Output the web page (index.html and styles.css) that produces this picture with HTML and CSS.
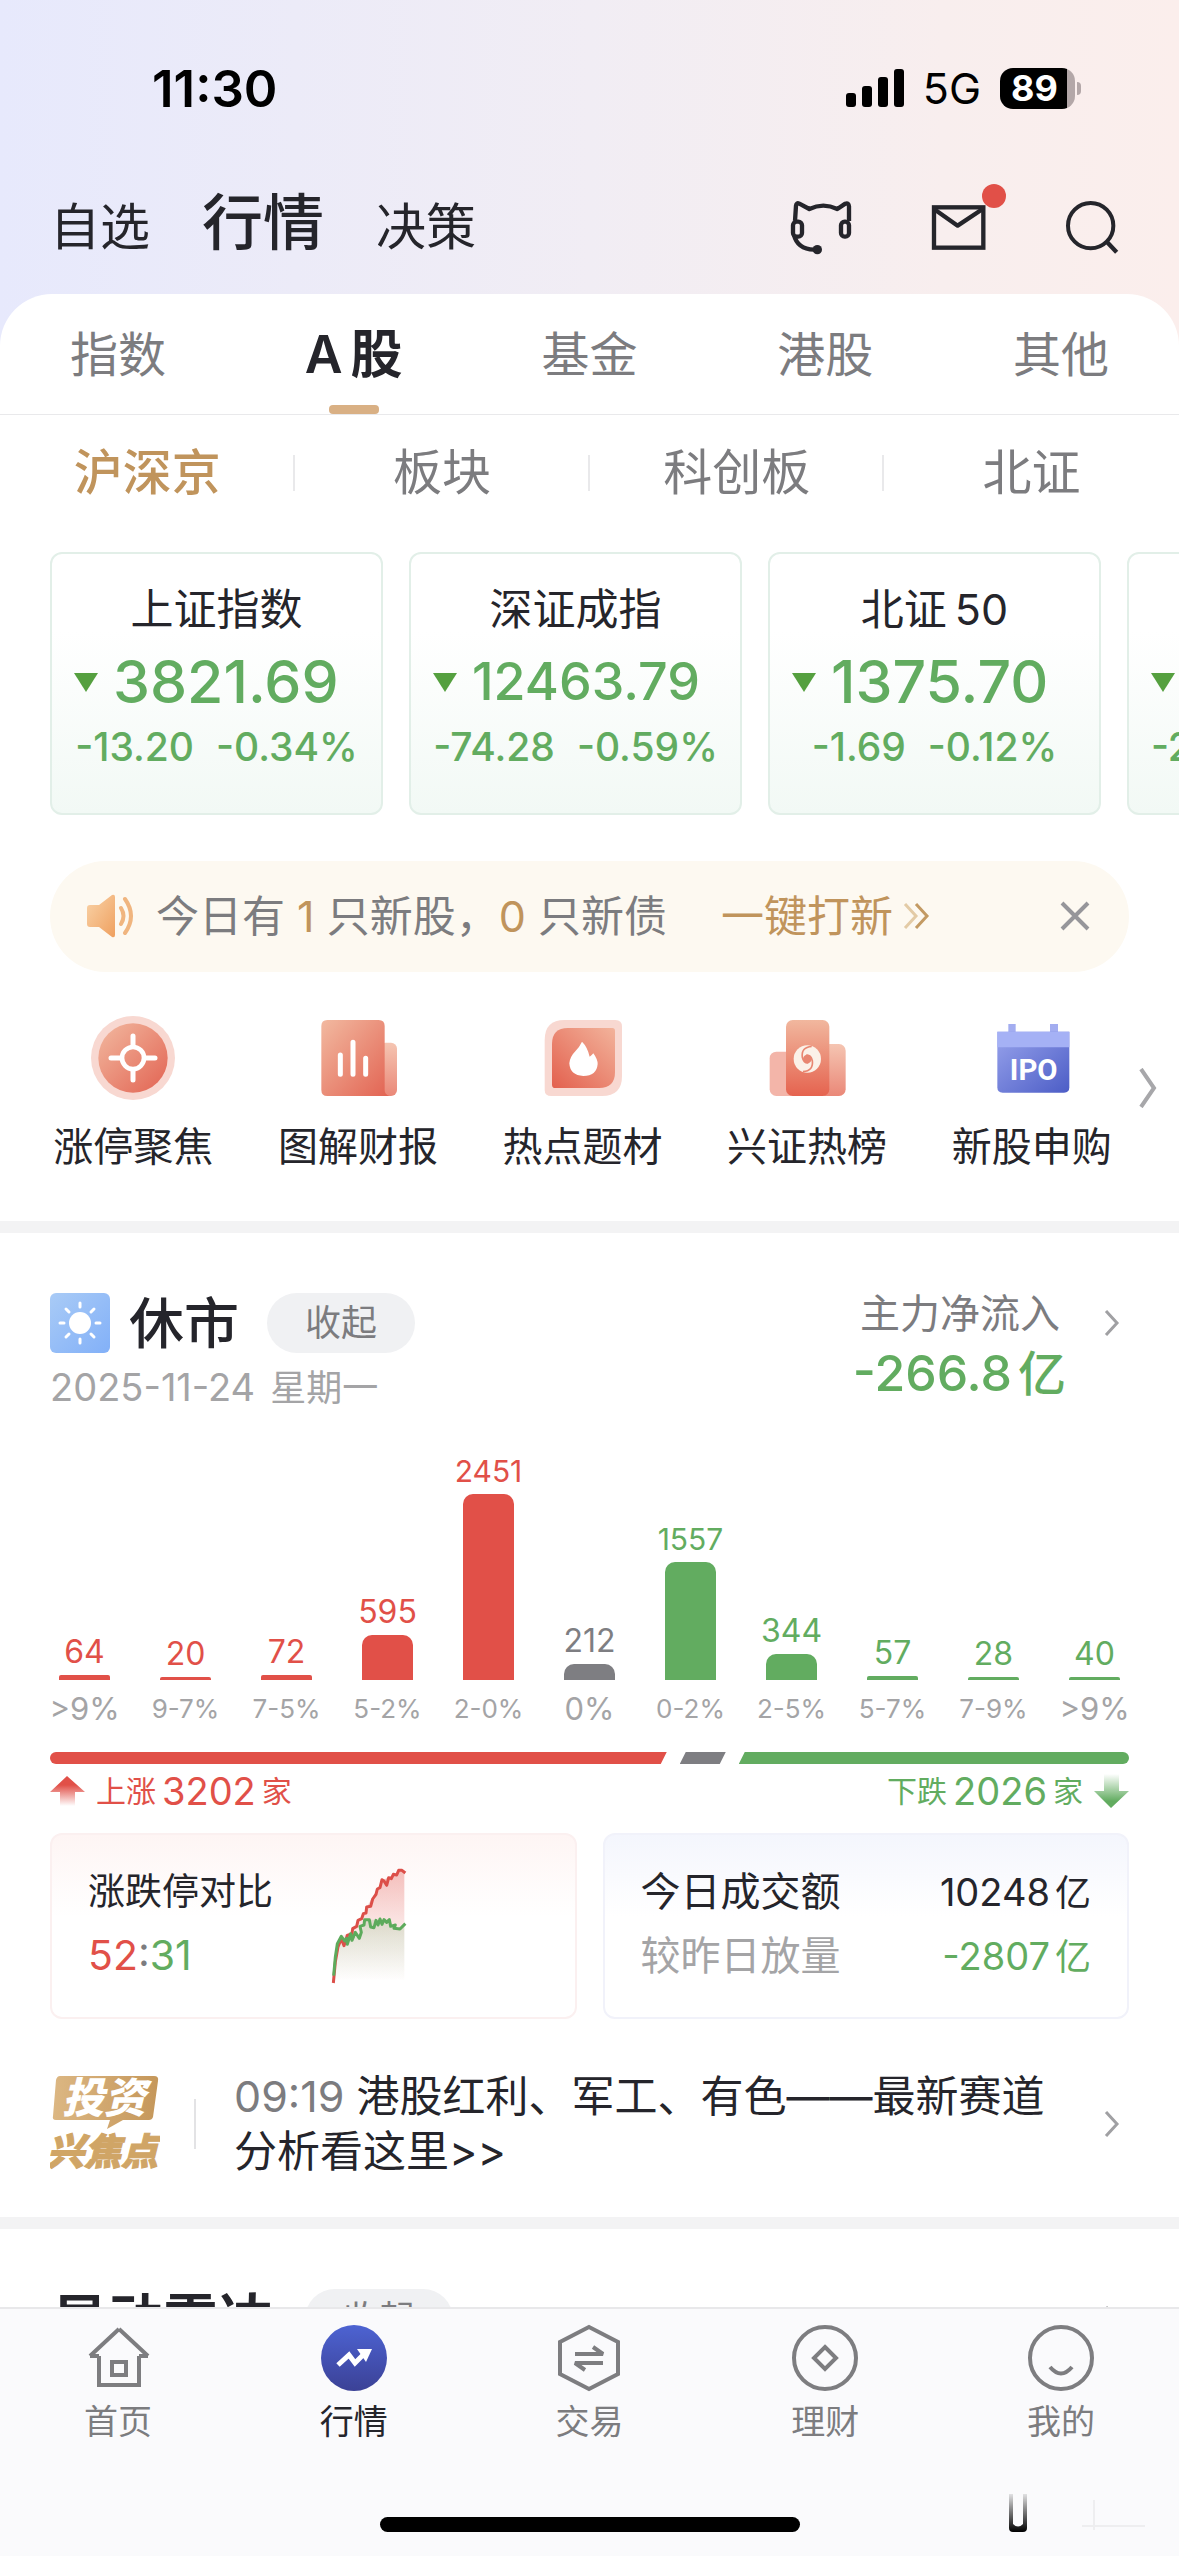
FILE: index.html
```html
<!DOCTYPE html>
<html lang="zh-CN">

<head>
    <meta charset="utf-8">
    <meta name="viewport" content="width=device-width">
    <title>行情</title>
    <link rel="stylesheet" href="styles.css">
</head>

<body>
    <header class="top">
        <div class="status">
            <span class="time">11:30</span>
            <div class="status-right">
                <svg class="signal" viewBox="0 0 58 38">
                    <rect x="0" y="24" width="10" height="14" rx="3" />
                    <rect x="16" y="17" width="10" height="21" rx="3" />
                    <rect x="32" y="8" width="10" height="30" rx="3" />
                    <rect x="48" y="0" width="10" height="38" rx="3" />
                </svg>
                <span class="net">5G</span>
                <span class="battery"><b>89</b></span>
            </div>
        </div>
        <div class="topnav">
            <nav class="main-tabs">
                <a href="#">自选</a>
                <a href="#" class="active">行情</a>
                <a href="#">决策</a>
            </nav>
            <div class="tools">
                <button title="客服">
                    <svg width="62" height="56" viewBox="0 0 186 168" fill="none" stroke="#25252b" stroke-width="13" stroke-linejoin="round">
                        <path d="M15 66L18 20q1-10 10-6L58 30Q100 10 142 30L166 14q10-4 11 8V66" />
                        <rect x="9" y="68" width="27" height="45" rx="11" />
                        <rect x="153" y="68" width="24" height="45" rx="11" />
                        <path d="M12 108Q22 150 72 152" />
                        <circle cx="82" cy="152" r="14" fill="#25252b" stroke="none" />
                    </svg>
                </button>
                <button class="mail" title="消息">
                    <svg width="55" height="46" viewBox="0 0 165 138" fill="none" stroke="#25252b" stroke-width="13">
                        <rect x="9" y="10" width="148" height="121" />
                        <path d="M12 17L80 65L155 15" stroke-linejoin="round" />
                    </svg>
                    <i class="dot"></i>
                </button>
                <button title="搜索">
                    <svg width="55" height="55" viewBox="0 0 165 165" fill="none" stroke="#25252b" stroke-width="12">
                        <circle cx="77" cy="77" r="68" />
                        <path d="M126 126L155 157" stroke-width="13" />
                    </svg>
                </button>
            </div>
        </div>
    </header>

    <main>
        <nav class="sub-tabs">
            <a href="#">指数</a>
            <a href="#" class="active">A<span class="gap">股</span></a>
            <a href="#">基金</a>
            <a href="#">港股</a>
            <a href="#">其他</a>
        </nav>
        <nav class="board-tabs">
            <a href="#" class="active">沪深京</a>
            <a href="#">板块</a>
            <a href="#">科创板</a>
            <a href="#">北证</a>
        </nav>

        <div class="indexes">
            <a href="#" class="index">
                <h3>上证指数</h3>
                <p class="price">3821.69</p>
                <p class="change"><span>-13.20</span><span>-0.34%</span></p>
            </a>
            <a href="#" class="index">
                <h3>深证成指</h3>
                <p class="price long">12463.79</p>
                <p class="change"><span>-74.28</span><span>-0.59%</span></p>
            </a>
            <a href="#" class="index">
                <h3>北证<span class="gap">50</span></h3>
                <p class="price">1375.70</p>
                <p class="change"><span>-1.69</span><span>-0.12%</span></p>
            </a>
            <a href="#" class="index">
                <h3>创业板指</h3>
                <p class="price">2902.05</p>
                <p class="change"><span>-26.90</span><span>-0.60%</span></p>
            </a>
        </div>

        <div class="notice">
            <svg class="speaker" width="50" height="44" viewBox="0 0 50 44">
                <defs>
                    <linearGradient id="spk" x1="0" y1="0" x2="1" y2="1">
                        <stop offset="0" stop-color="#f9d3a8" />
                        <stop offset="1" stop-color="#efa05f" />
                    </linearGradient>
                </defs>
                <path d="M3 11H12L25 1Q28 0 28 3V41Q28 44 25 43L12 33H3Q0 33 0 30V14Q0 11 3 11Z" fill="url(#spk)" />
                <path d="M34 14Q39 22 34 30M38 5Q50 22 38 39" fill="none" stroke="#f0b57f" stroke-width="4" stroke-linecap="round" />
            </svg>
            <p>今日有 <em>1</em> 只新股，<em>0</em> 只新债</p>
            <a href="#">一键打新
                <svg width="28" height="28" viewBox="0 0 28 28" fill="none" stroke-width="3">
                    <path d="M2 2L13 14L2 26" stroke="#e3cba6" />
                    <path d="M13 2L24 14L13 26" stroke="#c39a63" />
                </svg>
            </a>
            <button class="close" title="关闭">
                <svg width="30" height="30" viewBox="0 0 30 30" stroke="#96969a" stroke-width="4">
                    <path d="M2 2L28 28M28 2L2 28" />
                </svg>
            </button>
        </div>

        <div class="quick">
            <svg class="defs">
                <defs>
                    <linearGradient id="red" x1="0" y1="0" x2="1" y2="1">
                        <stop offset="0" stop-color="#f2b9a0" />
                        <stop offset="1" stop-color="#e26352" />
                    </linearGradient>
                    <linearGradient id="redDown" x1="0" y1="0" x2="0" y2="1">
                        <stop offset="0" stop-color="#f1b79e" />
                        <stop offset="1" stop-color="#e5634f" />
                    </linearGradient>
                    <linearGradient id="redLeft" x1="1" y1="0" x2="0" y2="1">
                        <stop offset="0" stop-color="#f2b39b" />
                        <stop offset="1" stop-color="#e3604e" />
                    </linearGradient>
                    <linearGradient id="pale" x1="0" y1="0" x2="0" y2="1">
                        <stop offset="0" stop-color="#f5c5b2" />
                        <stop offset="1" stop-color="#ea8878" />
                    </linearGradient>
                    <linearGradient id="blue" x1="0" y1="0" x2="1" y2="1">
                        <stop offset="0" stop-color="#98a3ec" />
                        <stop offset="1" stop-color="#4c5dc6" />
                    </linearGradient>
                </defs>
            </svg>
            <a href="#">
                <svg viewBox="0 0 252 252">
                    <circle cx="126" cy="126" r="126" fill="#f8d8d1" />
                    <circle cx="126" cy="126" r="104" fill="url(#red)" />
                    <circle cx="126" cy="126" r="33" fill="none" stroke="#fff" stroke-width="14" />
                    <path d="M126 60V90M126 162V192M60 126H90M162 126H192" stroke="#fff" stroke-width="15" stroke-linecap="round" />
                </svg>
                涨停聚焦
            </a>
            <a href="#">
                <svg viewBox="0 0 252 252">
                    <rect x="190" y="80" width="53" height="160" rx="18" fill="url(#pale)" />
                    <path d="M34 12H188Q206 12 206 30V222Q206 236 220 240H34Q16 240 16 222V30Q16 12 34 12Z" fill="url(#red)" />
                    <path d="M73 117V175M111 79V175M149 127V175" stroke="#fff" stroke-width="15" stroke-linecap="round" />
                </svg>
                图解财报
            </a>
            <a href="#">
                <svg viewBox="0 0 252 252">
                    <path d="M74 12H226Q246 12 246 32V180Q246 240 186 240H34Q14 240 14 222V72Q14 12 74 12Z" fill="#f8d8d1" />
                    <path d="M84 36H217Q225 36 225 44V168Q225 216 177 216H46Q36 216 36 206V84Q36 36 84 36Z" fill="url(#redLeft)" />
                    <path d="M126 77Q142 92 149 122Q156 118 160 112Q173 130 173 144Q170 180 130 180Q90 178 88 142Q90 122 106 106Q119 92 126 77Z" fill="#fff" />
                </svg>
                热点题材
            </a>
            <a href="#">
                <svg viewBox="0 0 252 252">
                    <rect x="14" y="107" width="80" height="133" rx="20" fill="#f3b5a9" />
                    <rect x="160" y="84" width="82" height="156" rx="20" fill="url(#pale)" />
                    <rect x="63" y="12" width="130" height="228" rx="20" fill="url(#redDown)" />
                    <circle cx="127" cy="129" r="41" fill="#fbf1e8" />
                    <circle cx="127" cy="129" r="13" fill="#e88671" />
                    <path d="M140 91Q108 94 112 124Q116 142 130 141M114 167Q146 164 142 134Q138 116 124 117" fill="none" stroke="#e88671" stroke-width="5" />
                </svg>
                兴证热榜
            </a>
            <a href="#">
                <svg viewBox="0 0 252 252">
                    <path d="M55 24H77V50H55ZM180 24H204V50H180Z" fill="#a3adf0" />
                    <path d="M22 47H238V214Q238 230 222 230H38Q22 230 22 214Z" fill="url(#blue)" />
                    <path d="M22 47H238V94H22Z" fill="#a5b1f5" />
                    <text x="131" y="193" class="ipo">IPO</text>
                </svg>
                新股申购
            </a>
            <svg class="more" viewBox="0 0 18 40" fill="none" stroke="#a7a7aa" stroke-width="4">
                <path d="M2 1L15 20L2 39" />
            </svg>
        </div>

        <section class="market">
            <div class="market-head">
                <div class="market-left">
                    <div class="market-title">
                        <svg width="60" height="60" viewBox="0 0 60 60">
                            <defs>
                                <linearGradient id="sky" x1="0" y1="0" x2="1" y2="1">
                                    <stop offset="0" stop-color="#a9cbf6" />
                                    <stop offset="1" stop-color="#82b0f8" />
                                </linearGradient>
                            </defs>
                            <rect width="60" height="60" rx="6" fill="url(#sky)" />
                            <circle cx="30" cy="30" r="11" fill="#fff" />
                            <path d="M30 10V14M30 46V50M10 30H14M46 30H50M16 16L19 19M41 41L44 44M44 16L41 19M19 41L16 44" stroke="#fff" stroke-width="3" stroke-linecap="round" />
                        </svg>
                        <h2>休市</h2>
                        <button class="pill">收起</button>
                    </div>
                    <p class="date">2025-11-24<small>星期一</small></p>
                </div>
                <a href="#" class="flow">
                    <span>
                        <span class="flow-name">主力净流入</span>
                        <strong>-266.8<small>亿</small></strong>
                    </span>
                    <svg class="arrow" viewBox="0 0 16 26"><path d="M2 1L13 13L2 25" /></svg>
                </a>
            </div>

            <div class="chart">
                <div class="col up"><b>64</b><i class="thin" style="height: 5px"></i></div>
                <div class="col up"><b>20</b><i class="thin" style="height: 3px"></i></div>
                <div class="col up"><b>72</b><i class="thin" style="height: 5px"></i></div>
                <div class="col up"><b>595</b><i style="height: 45px"></i></div>
                <div class="col up"><b class="wide">2451</b><i style="height: 186px"></i></div>
                <div class="col flat"><b>212</b><i style="height: 16px"></i></div>
                <div class="col down"><b class="wide">1557</b><i style="height: 118px"></i></div>
                <div class="col down"><b>344</b><i style="height: 26px"></i></div>
                <div class="col down"><b>57</b><i class="thin" style="height: 4px"></i></div>
                <div class="col down"><b>28</b><i class="thin" style="height: 3px"></i></div>
                <div class="col down"><b>40</b><i class="thin" style="height: 3px"></i></div>
            </div>
            <div class="axis">
                <span class="big">&gt;9%</span>
                <span>9-7%</span>
                <span>7-5%</span>
                <span>5-2%</span>
                <span>2-0%</span>
                <span class="big">0%</span>
                <span>0-2%</span>
                <span>2-5%</span>
                <span>5-7%</span>
                <span>7-9%</span>
                <span class="big">&gt;9%</span>
            </div>

            <div class="balance">
                <i class="b-up" style="flex-grow: 3202"></i>
                <i class="b-flat" style="flex-grow: 212"></i>
                <i class="b-down" style="flex-grow: 2026"></i>
            </div>
            <div class="counts">
                <span class="count up">
                    <svg width="35" height="30" viewBox="0 0 35 30">
                        <defs>
                            <linearGradient id="aup" x1="0" y1="0" x2="0" y2="1">
                                <stop offset="0.3" stop-color="#e15048" />
                                <stop offset="1" stop-color="#e15048" stop-opacity="0" />
                            </linearGradient>
                        </defs>
                        <path d="M17 0L35 16H25V30H10V16H0Z" fill="url(#aup)" />
                    </svg>
                    上涨<b>3202</b>家
                </span>
                <span class="count down">
                    下跌<b>2026</b>家
                    <svg width="35" height="34" viewBox="0 0 35 34">
                        <defs>
                            <linearGradient id="adn" x1="0" y1="0" x2="0" y2="1">
                                <stop offset="0" stop-color="#62ac60" stop-opacity="0" />
                                <stop offset="0.8" stop-color="#62ac60" />
                            </linearGradient>
                        </defs>
                        <path d="M17 34L35 17H25V0H10V17H0Z" fill="url(#adn)" />
                    </svg>
                </span>
            </div>

            <div class="stats">
                <a href="#" class="stat limit">
                    <div>
                        <p>涨跌停对比</p>
                        <p class="ratio"><span class="up">52</span>:<span class="down">31</span></p>
                    </div>
                    <svg width="78" height="119" viewBox="0 0 234 357">
                        <defs>
                            <linearGradient id="ru" x1="0" y1="0" x2="0" y2="1">
                                <stop offset="0" stop-color="#e15048" stop-opacity="0.35" />
                                <stop offset="0.6" stop-color="#e15048" stop-opacity="0.1" />
                                <stop offset="1" stop-color="#e15048" stop-opacity="0" />
                            </linearGradient>
                            <linearGradient id="gd" x1="0" y1="0" x2="0" y2="1">
                                <stop offset="0" stop-color="#62ac60" stop-opacity="0.2" />
                                <stop offset="1" stop-color="#62ac60" stop-opacity="0" />
                            </linearGradient>
                        </defs>
                        <path d="M12 345L30 210L70 190L95 155L110 120L140 70L160 38L190 25L210 10L223 15V340H12Z" fill="url(#ru)" />
                        <path d="M12 340L35 210L90 210L105 158L175 158L200 185L223 175V340Z" fill="url(#gd)" />
                        <path d="M10 348L16 285L24 240L34 215L42 236L52 205L66 200L68 185L80 178L84 160L95 155L100 140L108 138L110 120L122 118L128 96L138 82L142 66L150 62L156 38L162 42L170 55L176 32L184 35L190 22L200 24L206 10L216 10L226 18" fill="none" stroke="#dc4f49" stroke-width="9" stroke-linejoin="round" />
                        <path d="M11 326L16 270L22 230L34 208L44 222L50 214L52 232L62 200L66 220L76 196L88 214L94 196L90 178L102 174L104 158L118 158L122 180L132 182L138 160L144 174L150 156L156 172L162 158L170 166L178 158L182 178L196 174L192 184L210 186L226 170" fill="none" stroke="#5dab5c" stroke-width="9" stroke-linejoin="round" />
                    </svg>
                </a>
                <a href="#" class="stat volume">
                    <p><span>今日成交额</span><span class="num">10248<small>亿</small></span></p>
                    <p class="muted"><span>较昨日放量</span><span class="num down">-2807<small>亿</small></span></p>
                </a>
            </div>

            <a href="#" class="news">
                <svg class="focus" width="110" height="98" viewBox="0 0 110 98">
                    <defs>
                        <linearGradient id="gold" x1="0" y1="0" x2="1" y2="0">
                            <stop offset="0" stop-color="#dcb783" />
                            <stop offset="1" stop-color="#c5975a" />
                        </linearGradient>
                    </defs>
                    <path d="M10 1H104Q109 1 108 6L103 42Q102 45 99 45H73L57 54L60 45H6Q2 45 3 41L6 5Q7 1 10 1Z" fill="url(#gold)" />
                    <text x="12" y="38" class="focus-a">投资</text>
                    <text x="-3" y="90" class="focus-b">兴焦点</text>
                </svg>
                <p><time>09:19</time> 港股红利、军工、有色——最新赛道分析看这里&gt;&gt;</p>
                <svg class="arrow" viewBox="0 0 16 26"><path d="M2 1L13 13L2 25" /></svg>
            </a>
        </section>

        <section class="radar">
            <h2>异动雷达</h2>
            <button class="pill">收起</button>
            <svg class="arrow" viewBox="0 0 16 26"><path d="M2 1L13 13L2 25" /></svg>
        </section>
    </main>

    <footer class="tabbar">
        <nav>
            <a href="#">
                <svg viewBox="0 0 68 68">
                    <path d="M15 32V61H55V32M6 32H15M35 5L6 32M35 5L64 32M55 32H64" />
                    <rect x="28" y="38" width="14" height="13" />
                </svg>
                首页
            </a>
            <a href="#" class="active">
                <svg viewBox="0 0 68 68">
                    <defs>
                        <linearGradient id="on" x1="0" y1="0" x2="0" y2="1">
                            <stop offset="0" stop-color="#4d63d2" />
                            <stop offset="1" stop-color="#3b4196" />
                        </linearGradient>
                    </defs>
                    <circle cx="34" cy="34" r="33" fill="url(#on)" stroke="none" />
                    <path d="M18 41L29 31L35 39L46 28" stroke="#fff" stroke-width="5" />
                    <path d="M37 25H52L46 38Z" fill="#fff" stroke="none" />
                </svg>
                行情
            </a>
            <a href="#">
                <svg viewBox="0 0 68 68">
                    <path d="M34 3L63 18V50L34 65L5 50V18Z" />
                    <path d="M20 30H48L38 23M48 39H20L30 46" stroke-linejoin="bevel" />
                </svg>
                交易
            </a>
            <a href="#">
                <svg viewBox="0 0 68 68">
                    <circle cx="34" cy="34" r="31" />
                    <path d="M34 23L45 34L34 45L23 34Z" />
                </svg>
                理财
            </a>
            <a href="#">
                <svg viewBox="0 0 68 68">
                    <circle cx="34" cy="34" r="31" />
                    <path d="M23 43Q34 56 45 43" />
                </svg>
                我的
            </a>
        </nav>
        <div class="home-bar"></div>
        <svg class="mark" width="150" height="40" viewBox="0 0 150 40">
            <defs>
                <linearGradient id="ink" x1="0" y1="0" x2="0" y2="1">
                    <stop offset="0" stop-color="#000" stop-opacity="0.1" />
                    <stop offset="1" stop-color="#000" />
                </linearGradient>
            </defs>
            <path d="M9 0H13V30Q18 35 23 30V0H27V34Q27 38 23 38H13Q9 38 9 34Z" fill="url(#ink)" />
            <path d="M82 32H145M94 6V36" stroke="#eeeef0" stroke-width="2" />
        </svg>
    </footer>
</body>

</html>
```
FILE: styles.css
```css
:root {
    --ink: #25252b;
    --gray: #7c7c7f;
    --light: #a4a4a6;
    --red: #e15048;
    --green: #62ac60;
    --gold: #c0945c;
}

* {
    box-sizing: border-box;
}

body {
    margin: 0;
    height: 100vh;
    display: flex;
    flex-direction: column;
    overflow: hidden;
    background: linear-gradient(90deg, #e7e9fc, #ecebf8 25%, #f1edf4 50%, #f8eeee 80%, #fbeeec);
    color: var(--ink);
    font-family: Inter, "Noto Sans CJK SC", sans-serif;
    font-size: 40px;
}

a {
    color: inherit;
    text-decoration: none;
}

h2, h3, p {
    margin: 0;
}

button {
    padding: 0;
    border: 0;
    background: none;
    color: inherit;
    font: inherit;
}

svg {
    display: block;
    flex-shrink: 0;
}

.up {
    color: var(--red);
}

.down {
    color: var(--green);
}

.gap {
    margin-left: 8px;
}

/* status bar */
.status {
    display: flex;
    justify-content: space-between;
    align-items: center;
    height: 116px;
    padding: 60px 98px 0 152px;
    color: #000;
}

.time {
    font-size: 51px;
    font-weight: 600;
}

.status-right {
    display: flex;
    align-items: center;
    gap: 19px;
}

.signal {
    width: 58px;
    height: 38px;
}

.net {
    font-size: 43px;
}

.battery {
    position: relative;
    width: 75px;
    height: 41px;
    margin-right: 6px;
    border-radius: 13px;
    background: linear-gradient(90deg, #000 67px, #b3a7a8 67px);
    color: #fff;
    font-size: 36px;
    line-height: 41px;
    text-align: center;
}

.battery b {
    margin-right: 6px;
}

.battery::after {
    content: "";
    position: absolute;
    right: -6px;
    top: 14px;
    width: 4px;
    height: 13px;
    border-radius: 0 4px 4px 0;
    background: #b3a7a8;
}

/* top navigation */
.topnav {
    display: flex;
    justify-content: space-between;
    align-items: center;
    height: 178px;
    padding: 72px 59px 28px 50px;
}

.main-tabs {
    display: flex;
    align-items: baseline;
    gap: 52px;
    padding-bottom: 4px;
    font-size: 50px;
    line-height: 72px;
}

.main-tabs .active {
    font-size: 61px;
    font-weight: 500;
}

.tools {
    display: flex;
    align-items: center;
    gap: 79px;
}

.mail {
    position: relative;
}

.dot {
    position: absolute;
    right: -20px;
    top: -20px;
    width: 24px;
    height: 24px;
    border-radius: 50%;
    background: var(--red);
}

main {
    flex: 1;
    min-height: 0;
    overflow: hidden;
    border-radius: 52px 52px 0 0;
    background: #fff;
}

.sub-tabs {
    display: grid;
    grid-template-columns: repeat(5, 1fr);
    padding-top: 25px;
    border-bottom: 1px solid #e9e9eb;
    color: var(--gray);
    font-size: 48px;
    line-height: 72px;
    text-align: center;
}

.sub-tabs a::after {
    content: "";
    display: block;
    width: 50px;
    height: 9px;
    margin: 14px auto 0;
    border-radius: 4px;
}

.sub-tabs .active {
    color: var(--ink);
    font-size: 52px;
    font-weight: 600;
}

.sub-tabs .active::after {
    background: #d9b084;
}

.board-tabs {
    display: grid;
    grid-template-columns: repeat(4, 1fr);
    padding: 25px 0 46px;
    color: var(--gray);
    font-size: 49px;
    line-height: 66px;
    text-align: center;
}

.board-tabs a {
    background: linear-gradient(#e9e9eb, #e9e9eb) right center / 2px 36px no-repeat;
}

.board-tabs a:last-child {
    background: none;
}

.board-tabs .active {
    color: var(--gold);
    font-weight: 500;
}

/* index cards */
.indexes {
    display: flex;
    gap: 26px;
    padding-left: 50px;
    overflow: hidden;
}

.index {
    flex: 0 0 333px;
    padding: 25px 22px 41px;
    border: 2px solid #e2efe8;
    border-radius: 12px;
    background: linear-gradient(#fff 30%, #f2f9f5);
    color: var(--green);
    text-align: center;
}

.index h3 {
    color: var(--ink);
    font-size: 43px;
    font-weight: 400;
    line-height: 60px;
}

.price {
    display: flex;
    align-items: center;
    gap: 15px;
    margin-top: 8px;
    font-size: 59px;
    font-weight: 500;
    line-height: 70px;
}

.price.long {
    font-size: 52px;
}

.price::before {
    content: "";
    border: 12px solid transparent;
    border-top: 19px solid #55a03f;
    border-bottom: 0;
}

.change {
    display: flex;
    justify-content: center;
    gap: 22px;
    margin-top: 5px;
    font-size: 39px;
    font-weight: 500;
    line-height: 50px;
}

/* new share notice */
.notice {
    display: flex;
    align-items: center;
    height: 111px;
    margin: 46px 50px 0;
    padding: 0 39px 2px 37px;
    border-radius: 56px;
    background: #fdf9f1;
    color: var(--gray);
    font-size: 43px;
    line-height: 56px;
}

.notice p {
    margin: 0 54px 0 19px;
}

.notice em {
    color: var(--gold);
    font-style: normal;
}

.notice a {
    display: flex;
    align-items: center;
    gap: 10px;
    color: var(--gold);
}

.close {
    margin-left: auto;
}

/* shortcuts */
.quick {
    position: relative;
    display: grid;
    grid-template-columns: repeat(5, 1fr);
    padding: 44px 35px 46px 21px;
    border-bottom: 12px solid #f3f3f4;
    line-height: 56px;
    text-align: center;
}

.quick a svg {
    width: 84px;
    height: 84px;
    margin: 0 auto 19px;
}

.quick .defs {
    position: absolute;
    width: 0;
    height: 0;
}

.ipo {
    fill: #fff;
    font-family: Roboto, sans-serif;
    font-size: 88px;
    font-weight: 700;
    text-anchor: middle;
}

.quick .more {
    position: absolute;
    right: 22px;
    top: 96px;
    width: 18px;
    height: 40px;
}

/* market mood */
.market {
    padding: 53px 50px 38px;
    border-bottom: 12px solid #f3f3f4;
}

.market-head {
    display: flex;
    justify-content: space-between;
}

.market-left {
    padding-top: 7px;
}

.market-title {
    display: flex;
    align-items: center;
    height: 60px;
}

h2 {
    font-size: 55px;
    font-weight: 500;
    line-height: 60px;
}

.market-title h2 {
    margin: 0 28px 0 19px;
}

.pill {
    height: 60px;
    padding: 0 38px;
    border-radius: 30px;
    background: #f0f1f3;
    color: var(--gray);
    font-size: 36px;
    line-height: 60px;
}

.date {
    margin-top: 9px;
    color: var(--light);
    font-size: 38px;
    line-height: 50px;
}

.date small {
    margin-left: 15px;
    font-size: 36px;
}

.flow {
    display: flex;
    gap: 38px;
    text-align: right;
}

.flow-name {
    display: block;
    padding-right: 6px;
    color: var(--gray);
    line-height: 56px;
}

.flow strong {
    display: block;
    color: var(--green);
    font-size: 50px;
    font-weight: 500;
    line-height: 62px;
}

.flow small {
    margin-left: 6px;
    font-size: 48px;
}

.arrow {
    width: 16px;
    height: 26px;
    fill: none;
    stroke: #a0a0a3;
    stroke-width: 3;
}

.flow .arrow {
    margin: 24px 9px 0 0;
}

.chart,
.axis {
    display: grid;
    grid-template-columns: repeat(11, 1fr);
    margin: 0 -16px;
    text-align: center;
}

.chart {
    align-items: end;
    margin-top: 40px;
}

.col b {
    display: block;
    margin-bottom: 5px;
    font-size: 32px;
    font-weight: 400;
    line-height: 36px;
}

.col .wide {
    font-size: 30px;
}

.col i {
    display: block;
    width: 51px;
    margin: 0 auto;
    border-radius: 10px 10px 0 0;
    background: currentColor;
}

.col .thin {
    border-radius: 2px 2px 0 0;
}

.flat {
    color: #7e7e82;
}

.axis {
    align-items: center;
    margin-top: 9px;
    color: var(--light);
    font-size: 26px;
    line-height: 40px;
}

.axis .big {
    font-size: 31px;
}

.balance {
    display: flex;
    gap: 13px;
    height: 12px;
    margin-top: 23px;
}

.balance i {
    flex-basis: 0;
}

.b-up {
    border-radius: 6px 0 0 6px;
    background: var(--red);
    clip-path: polygon(0 0, 100% 0, calc(100% - 6px) 100%, 0 100%);
}

.b-flat {
    min-width: 46px;
    background: #7e7e82;
    clip-path: polygon(6px 0, 100% 0, calc(100% - 6px) 100%, 0 100%);
}

.b-down {
    border-radius: 0 6px 6px 0;
    background: var(--green);
    clip-path: polygon(6px 0, 100% 0, 100% 100%, 0 100%);
}

.counts {
    display: flex;
    justify-content: space-between;
    margin-top: 4px;
    font-size: 30px;
    line-height: 46px;
}

.count {
    display: flex;
    align-items: center;
}

.count.up svg {
    margin-right: 11px;
}

.count.down svg {
    margin-left: 11px;
}

.count b {
    margin: 0 6px;
    font-size: 38px;
    font-weight: 400;
}

.stats {
    display: grid;
    grid-template-columns: 1fr 1fr;
    gap: 26px;
    margin-top: 19px;
    line-height: 56px;
}

.stat {
    padding: 29px 36px 31px;
    border: 2px solid #fbf0f0;
    border-radius: 12px;
}

.stat p + p {
    margin-top: 7px;
}

.limit {
    display: flex;
    gap: 57px;
    background: linear-gradient(#fef5f4, #fff 45%);
    font-size: 37px;
}

.limit svg {
    margin-top: 3px;
}

.ratio {
    color: var(--gray);
    font-size: 41px;
}

.volume {
    border-color: #f1f2fa;
    background: linear-gradient(#f4f6fd, #fff 45%);
}

.volume p {
    display: flex;
    justify-content: space-between;
}

.num {
    font-size: 38px;
}

.num small {
    margin-left: 5px;
    font-size: 36px;
}

.muted {
    color: var(--light);
}

.news {
    display: flex;
    align-items: center;
    margin-top: 50px;
    font-size: 43px;
    line-height: 55px;
}

.news p {
    flex: 1;
    margin-left: 34px;
    padding: 0 50px 0 40px;
    background: linear-gradient(#e3e3e5, #e3e3e5) left center / 2px 50px no-repeat;
}

.news time {
    color: var(--gray);
}

.news .arrow {
    margin-right: 9px;
}

.focus-a,
.focus-b {
    font-family: "Noto Sans CJK SC", sans-serif;
    font-style: italic;
    font-weight: 900;
}

.focus-a {
    fill: #fff;
    font-size: 42px;
}

.focus-b {
    fill: #d0a566;
    stroke: #d0a566;
    stroke-width: 1px;
    font-size: 37px;
}

.radar {
    display: flex;
    align-items: center;
    padding: 60px 59px 60px 53px;
}

.radar h2 {
    margin-right: 32px;
    font-weight: 600;
}

.radar .arrow {
    margin-left: auto;
}

/* bottom tabs */
.tabbar {
    position: relative;
    border-top: 2px solid #e8e8ea;
    background: #fafafc;
}

.tabbar nav {
    display: grid;
    grid-template-columns: repeat(5, 1fr);
    padding-top: 15px;
    color: var(--gray);
    font-size: 34px;
    line-height: 50px;
    text-align: center;
}

.tabbar a svg {
    width: 68px;
    height: 68px;
    margin: 0 auto 5px;
    fill: none;
    stroke: #7d7d80;
    stroke-width: 4;
}

.tabbar .active {
    color: var(--ink);
}

.home-bar {
    width: 420px;
    height: 15px;
    margin: 70px auto 24px;
    border-radius: 8px;
    background: #000;
}

.mark {
    position: absolute;
    right: 29px;
    bottom: 22px;
}
```
